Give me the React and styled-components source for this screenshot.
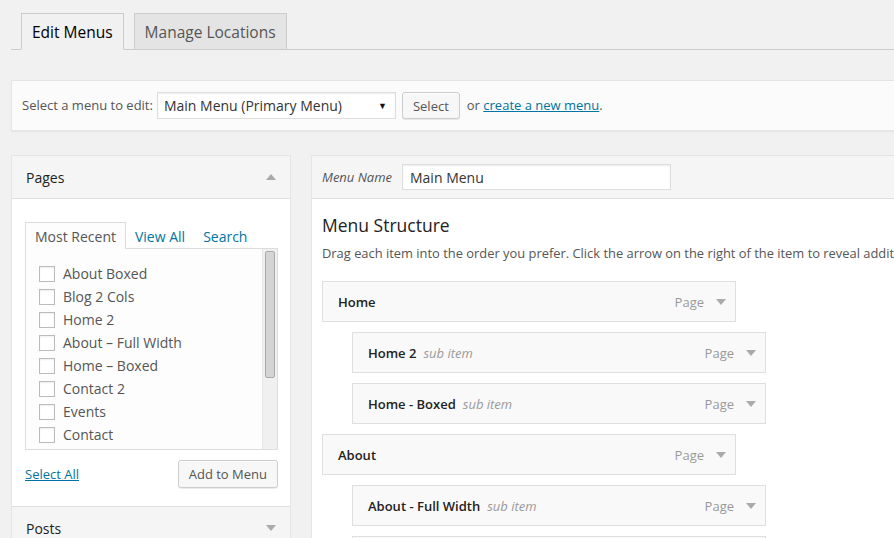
import React from "react"
import styled, { createGlobalStyle } from "styled-components"

const GlobalStyle = createGlobalStyle`
  html, body {
    margin: 0;
    padding: 0;
    background: #f1f1f1;
  }
  body {
    font-family: "Open Sans", "Liberation Sans", sans-serif;
    font-size: 13px;
    color: #444;
  }
  * {
    box-sizing: border-box;
  }
`

const Page = styled.div`
  width: 894px;
  height: 538px;
  overflow: hidden;
  padding-left: 11px;
`

const TabBar = styled.div`
  display: flex;
  gap: 10px;
  margin-top: 13px;
  padding-left: 10px;
  border-bottom: 1px solid #ccc;
  width: 1000px;
`

const NavTab = styled.div`
  height: 37px;
  padding: 0 10px;
  margin-bottom: -1px;
  display: flex;
  align-items: center;
  font-size: 15.5px;
  border: 1px solid #ccc;
  border-bottom-color: ${(p) => (p.$active ? "#f1f1f1" : "#ccc")};
  background: ${(p) => (p.$active ? "#f1f1f1" : "#e4e4e4")};
  color: ${(p) => (p.$active ? "#000" : "#555")};
`

const ManageBox = styled.div`
  margin-top: 30px;
  width: 1000px;
  height: 51px;
  padding: 11px 10px 0 10px;
  display: flex;
  align-items: flex-start;
  background: #fbfbfb;
  border: 1px solid #e5e5e5;
  box-shadow: 0 1px 1px rgba(0, 0, 0, 0.04);
`

const Label = styled.span`
  line-height: 27px;
  color: #555;
  margin-right: 4px;
`

const FakeSelect = styled.div`
  width: 239px;
  height: 27px;
  padding: 0 6px;
  display: flex;
  align-items: center;
  justify-content: space-between;
  background: #fff;
  border: 1px solid #ddd;
  box-shadow: inset 0 1px 2px rgba(0, 0, 0, 0.07);
  font-size: 14px;
  color: #333;
  margin-right: 6px;
`

const SelectArrow = styled.span`
  font-size: 9px;
  color: #111;
  margin-right: 2px;
`

const Button = styled.div`
  height: ${(p) => p.$h || 27}px;
  padding: 0 10px;
  display: inline-flex;
  align-items: center;
  font-size: 13px;
  color: #555;
  background: #f7f7f7;
  border: 1px solid #ccc;
  border-radius: 3px;
  box-shadow: inset 0 1px 0 #fff, 0 1px 0 rgba(0, 0, 0, 0.08);
`

const Aside = styled.span`
  line-height: 27px;
  color: #555;
  margin-left: 7px;
`

const Link = styled.a`
  color: #0074a2;
  text-decoration: underline;
  cursor: pointer;
`

const Columns = styled.div`
  display: flex;
  align-items: flex-start;
  gap: 20px;
  margin-top: 24px;
`

const LeftCol = styled.div`
  width: 280px;
  flex-shrink: 0;
  background: #fff;
  border: 1px solid #e5e5e5;
`

const SectionTitle = styled.div`
  height: 43px;
  padding: 0 14px;
  display: flex;
  align-items: center;
  justify-content: space-between;
  font-size: 14px;
  color: #222;
  background: #f5f5f5;
  border-bottom: ${(p) => (p.$open ? "1px solid #dfdfdf" : "none")};
  border-top: ${(p) => (p.$top ? "1px solid #dfdfdf" : "none")};
`

const Triangle = styled.span`
  width: 0;
  height: 0;
  border-left: 5px solid transparent;
  border-right: 5px solid transparent;
  ${(p) =>
    p.$up ? "border-bottom: 6px solid #aaa;" : "border-top: 6px solid #aaa;"}
`

const SectionBody = styled.div`
  padding: 23px 12px 18px 13px;
  background: #fff;
`

const InnerTabs = styled.div`
  display: flex;
  align-items: flex-end;
  font-size: 14px;
`

const InnerTab = styled.div`
  height: 27px;
  padding: 0 ${(p) => (p.$active ? 9 : 8)}px;
  display: flex;
  align-items: center;
  margin-bottom: -1px;
  position: relative;
  color: ${(p) => (p.$active ? "#555" : "#0074a2")};
  background: ${(p) => (p.$active ? "#fdfdfd" : "transparent")};
  border: 1px solid ${(p) => (p.$active ? "#ddd" : "transparent")};
  border-bottom: none;
`

const Panel = styled.div`
  height: 202px;
  display: flex;
  background: #fdfdfd;
  border: 1px solid #ddd;
`

const CheckList = styled.ul`
  flex: 1;
  list-style: none;
  margin: 0;
  padding: 13px 0 0 13px;
  overflow: hidden;
`

const CheckItem = styled.li`
  height: 23px;
  display: flex;
  align-items: center;
  gap: 8px;
  font-size: 14px;
  color: #555;
`

const Box = styled.span`
  width: 16px;
  height: 16px;
  background: #fff;
  border: 1px solid #bbb;
  box-shadow: inset 0 1px 2px rgba(0, 0, 0, 0.07);
`

const ScrollTrack = styled.div`
  width: 15px;
  padding: 2px 2px;
  background: #f0f0f0;
  border-left: 1px solid #e6e6e6;
`

const ScrollThumb = styled.div`
  height: 127px;
  background: #d4d4d4;
  border: 1px solid #aaa;
  border-radius: 2px;
`

const BodyFoot = styled.div`
  margin-top: 10px;
  display: flex;
  align-items: center;
  justify-content: space-between;
`

const RightCol = styled.div`
  width: 640px;
  flex-shrink: 0;
  background: #fff;
  border: 1px solid #e5e5e5;
  align-self: stretch;
  min-height: 420px;
`

const NameBar = styled.div`
  height: 43px;
  padding: 0 10px;
  display: flex;
  align-items: center;
  background: #f5f5f5;
  border-bottom: 1px solid #dfdfdf;
`

const NameLabel = styled.span`
  font-style: italic;
  color: #555;
  width: 80px;
`

const NameInput = styled.div`
  width: 269px;
  height: 26px;
  padding: 0 7px;
  display: flex;
  align-items: center;
  font-size: 14px;
  color: #333;
  background: #fff;
  border: 1px solid #ddd;
  box-shadow: inset 0 1px 2px rgba(0, 0, 0, 0.07);
`

const Content = styled.div`
  padding: 14px 10px 0 10px;
`

const Heading = styled.h3`
  margin: 0;
  font-size: 17.5px;
  font-weight: 400;
  color: #222;
  line-height: 25px;
`

const Description = styled.p`
  margin: 5px 0 0 0;
  font-size: 12.9px;
  color: #555;
  white-space: nowrap;
  line-height: 20px;
`

const ItemList = styled.div`
  margin-top: 18px;
  display: flex;
  flex-direction: column;
  gap: 10px;
`

const Item = styled.div`
  width: 414px;
  height: 41px;
  margin-left: ${(p) => (p.$sub ? 30 : 0)}px;
  padding: 0 9px 0 15px;
  display: flex;
  align-items: center;
  background: #f9f9f9;
  border: 1px solid #dfdfdf;
`

const ItemTitle = styled.span`
  font-weight: 600;
  color: #222;
`

const SubTag = styled.span`
  font-style: italic;
  color: #999;
  margin-left: 7px;
`

const ItemType = styled.span`
  margin-left: auto;
  color: #999;
  margin-right: 12px;
`

const pages = [
  "About Boxed",
  "Blog 2 Cols",
  "Home 2",
  "About \u2013 Full Width",
  "Home \u2013 Boxed",
  "Contact 2",
  "Events",
  "Contact",
  "Blog",
]

const items = [
  { title: "Home" },
  { title: "Home 2", sub: true },
  { title: "Home - Boxed", sub: true },
  { title: "About" },
  { title: "About - Full Width", sub: true },
  { title: "About Boxed", sub: true },
]

const App = () => (
  <Page>
    <GlobalStyle />
    <TabBar>
      <NavTab $active>Edit Menus</NavTab>
      <NavTab>Manage Locations</NavTab>
    </TabBar>

    <ManageBox>
      <Label>Select a menu to edit:</Label>
      <FakeSelect>
        Main Menu (Primary Menu)
        <SelectArrow>▼</SelectArrow>
      </FakeSelect>
      <Button>Select</Button>
      <Aside>
        or <Link>create a new menu</Link>.
      </Aside>
    </ManageBox>

    <Columns>
      <LeftCol>
        <SectionTitle $open>
          Pages
          <Triangle $up />
        </SectionTitle>
        <SectionBody>
          <InnerTabs>
            <InnerTab $active>Most Recent</InnerTab>
            <InnerTab>View All</InnerTab>
            <InnerTab>Search</InnerTab>
          </InnerTabs>
          <Panel>
            <CheckList>
              {pages.map((p) => (
                <CheckItem key={p}>
                  <Box />
                  {p}
                </CheckItem>
              ))}
            </CheckList>
            <ScrollTrack>
              <ScrollThumb />
            </ScrollTrack>
          </Panel>
          <BodyFoot>
            <Link>Select All</Link>
            <Button $h={28}>Add to Menu</Button>
          </BodyFoot>
        </SectionBody>
        <SectionTitle $top>
          Posts
          <Triangle />
        </SectionTitle>
      </LeftCol>

      <RightCol>
        <NameBar>
          <NameLabel>Menu Name</NameLabel>
          <NameInput>Main Menu</NameInput>
        </NameBar>
        <Content>
          <Heading>Menu Structure</Heading>
          <Description>
            Drag each item into the order you prefer. Click the arrow on the
            right of the item to reveal additional configuration options.
          </Description>
          <ItemList>
            {items.map((it) => (
              <Item key={it.title} $sub={it.sub}>
                <ItemTitle>{it.title}</ItemTitle>
                {it.sub && <SubTag>sub item</SubTag>}
                <ItemType>Page</ItemType>
                <Triangle />
              </Item>
            ))}
          </ItemList>
        </Content>
      </RightCol>
    </Columns>
  </Page>
)

export default App
